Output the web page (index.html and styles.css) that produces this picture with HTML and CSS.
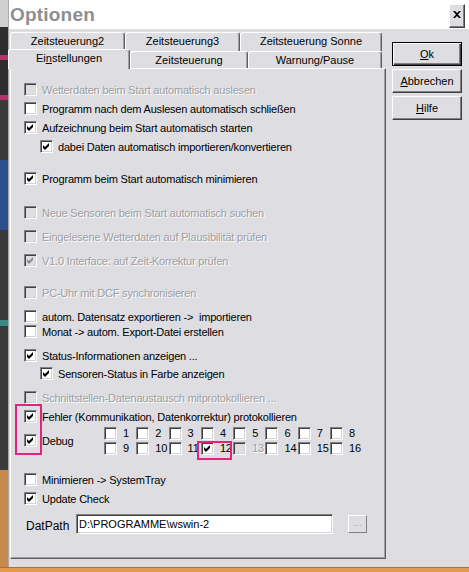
FILE: index.html
```html
<!DOCTYPE html>
<html lang="de">
<head>
    <meta charset="UTF-8">
    <title>Optionen</title>
    <link rel="stylesheet" href="styles.css">
</head>
<body>
<div class="screen">
    <div class="top">
        <div class="backdrop"></div>
        <div class="window">
            <div class="titlebar">
                <span class="title">Optionen</span>
                <span class="close">
                    <svg width="8" height="7" viewBox="0 0 8 7"><path d="M0 0h2l2 2 2-2h2L5 3.5 8 7H6L4 5 2 7H0l3-3.5z"/></svg>
                </span>
            </div>

            <div class="dialog">
                <div class="tabctl">
                    <div class="tabrow back">
                        <div class="tab w115">Zeitsteuerung2</div>
                        <div class="tab w115">Zeitsteuerung3</div>
                        <div class="tab w142">Zeitsteuerung Sonne</div>
                    </div>
                    <div class="tabrow front">
                        <div class="tab active">Ei<u>n</u>stellungen</div>
                        <div class="tab w118">Zeitsteuerung</div>
                        <div class="tab w134">Warnung/Pause</div>
                    </div>

                    <div class="panel">
                        <div class="row first disabled"><span class="cb"></span><span class="lbl">Wetterdaten beim Start automatisch auslesen</span></div>
                        <div class="row"><span class="cb"></span><span class="lbl">Programm nach dem Auslesen automatisch schließen</span></div>
                        <div class="row"><span class="cb on"><svg viewBox="0 0 9 9"><path d="M1 3l2 2 4-4v3L3 8 1 6z"/></svg></span><span class="lbl">Aufzeichnung beim Start automatisch starten</span></div>
                        <div class="row indent"><span class="cb on"><svg viewBox="0 0 9 9"><path d="M1 3l2 2 4-4v3L3 8 1 6z"/></svg></span><span class="lbl">dabei Daten automatisch importieren/konvertieren</span></div>

                        <div class="row sep"><span class="cb on"><svg viewBox="0 0 9 9"><path d="M1 3l2 2 4-4v3L3 8 1 6z"/></svg></span><span class="lbl">Programm beim Start automatisch minimieren</span></div>

                        <div class="row sep-l disabled"><span class="cb"></span><span class="lbl">Neue Sensoren beim Start automatisch suchen</span></div>
                        <div class="row mid disabled"><span class="cb"></span><span class="lbl">Eingelesene Wetterdaten auf Plausibilität prüfen</span></div>
                        <div class="row mid disabled"><span class="cb on"><svg viewBox="0 0 9 9"><path d="M1 3l2 2 4-4v3L3 8 1 6z"/></svg></span><span class="lbl">V1.0 Interface: auf Zeit-Korrektur prüfen</span></div>

                        <div class="row sep disabled"><span class="cb"></span><span class="lbl">PC-Uhr mit DCF synchronisieren</span></div>
                        <div class="row mid"><span class="cb"></span><span class="lbl">autom. Datensatz exportieren -&gt;&nbsp; importieren</span></div>
                        <div class="row tight"><span class="cb"></span><span class="lbl">Monat -&gt; autom. Export-Datei erstellen</span></div>
                        <div class="row mid"><span class="cb on"><svg viewBox="0 0 9 9"><path d="M1 3l2 2 4-4v3L3 8 1 6z"/></svg></span><span class="lbl">Status-Informationen anzeigen ...</span></div>
                        <div class="row near indent"><span class="cb on"><svg viewBox="0 0 9 9"><path d="M1 3l2 2 4-4v3L3 8 1 6z"/></svg></span><span class="lbl">Sensoren-Status in Farbe anzeigen</span></div>

                        <div class="row mid disabled"><span class="cb"></span><span class="lbl">Schnittstellen-Datenaustausch mitprotokollieren ...</span></div>
                        <div class="row"><span class="cb on"><svg viewBox="0 0 9 9"><path d="M1 3l2 2 4-4v3L3 8 1 6z"/></svg></span><span class="lbl">Fehler (Kommunikation, Datenkorrektur) protokollieren</span></div>

                        <div class="row debug">
                            <span class="cb on"><svg viewBox="0 0 9 9"><path d="M1 3l2 2 4-4v3L3 8 1 6z"/></svg></span>
                            <span class="lbl debug-lbl">Debug</span>
                            <div class="levels">
                                <div class="lvl"><span class="cb"></span>1</div>
                                <div class="lvl"><span class="cb"></span>2</div>
                                <div class="lvl"><span class="cb"></span>3</div>
                                <div class="lvl"><span class="cb"></span>4</div>
                                <div class="lvl"><span class="cb"></span>5</div>
                                <div class="lvl"><span class="cb"></span>6</div>
                                <div class="lvl"><span class="cb"></span>7</div>
                                <div class="lvl"><span class="cb"></span>8</div>
                                <div class="lvl"><span class="cb"></span>9</div>
                                <div class="lvl"><span class="cb"></span>10</div>
                                <div class="lvl"><span class="cb"></span>11</div>
                                <div class="lvl"><span class="cb on"><svg viewBox="0 0 9 9"><path d="M1 3l2 2 4-4v3L3 8 1 6z"/></svg></span>12</div>
                                <div class="lvl disabled"><span class="cb"></span>13</div>
                                <div class="lvl"><span class="cb"></span>14</div>
                                <div class="lvl"><span class="cb"></span>15</div>
                                <div class="lvl"><span class="cb"></span>16</div>
                            </div>
                        </div>

                        <div class="row sep"><span class="cb"></span><span class="lbl">Minimieren -&gt; SystemTray</span></div>
                        <div class="row"><span class="cb on"><svg viewBox="0 0 9 9"><path d="M1 3l2 2 4-4v3L3 8 1 6z"/></svg></span><span class="lbl">Update Check</span></div>

                        <div class="path-row">
                            <span class="path-lbl">DatPath</span>
                            <span class="path-input">D:\PROGRAMME\wswin-2</span>
                            <span class="browse">...</span>
                        </div>
                    </div>
                </div>

                <div class="buttons">
                    <button class="btn default"><u>O</u>k</button>
                    <button class="btn"><u>A</u>bbrechen</button>
                    <button class="btn"><u>H</u>ilfe</button>
                </div>
            </div>
        </div>
    </div>
    <div class="taskbar"></div>

    <div class="mark mark-debug"></div>
    <div class="mark mark-twelve"></div>
</div>
</body>
</html>
```

FILE: styles.css
```css
* {
    margin: 0;
    padding: 0;
    box-sizing: border-box;
}

body {
    font-family: "Liberation Sans", Arial, sans-serif;
    font-size: 11px;
    color: #000;
    background: #dedee2;
}

.screen {
    position: relative;
    display: flex;
    flex-direction: column;
    width: 469px;
    height: 572px;
    overflow: hidden;
    background: #dedee2;
}

.top {
    display: flex;
    height: 567px;
}

.backdrop {
    width: 8px;
    background: linear-gradient(to bottom,
        #d0d0d0 0 27px, #2e2e2e 27px 55px, #b8306a 55px 60px, #2e2e2e 60px 95px,
        #b8306a 95px 100px, #3a3a3a 100px 160px, #2b4f8a 160px 230px, #3a3a3a 230px 320px,
        #3b8a8a 320px 326px, #3a3a3a 326px 470px, #c78a4a 470px 567px);
}

.window {
    flex: 1;
    display: flex;
    flex-direction: column;
    border-left: 1px solid #a9a9ad;
    background: #dedee2;
}

/* title bar */
.titlebar {
    height: 29px;
    background: #fff;
    display: flex;
    align-items: flex-start;
    justify-content: space-between;
    padding-left: 1px;
}

.title {
    font-size: 19px;
    font-weight: bold;
    color: #8e8e92;
    line-height: 29px;
    letter-spacing: 0.2px;
}

.close {
    width: 16px;
    height: 24px;
    margin: 4px 4px 0 0;
    background: #dedee2;
    border: 1px solid;
    border-color: #fff #404040 #404040 #fff;
    box-shadow: inset -1px -1px #808080;
    display: flex;
    align-items: center;
    justify-content: center;
    padding-bottom: 4px;
}

.close svg {
    fill: #000;
}

/* dialog */
.dialog {
    flex: 1;
    display: flex;
    align-items: flex-start;
}

.tabctl {
    width: 376px;
    margin: 3px 0 0 1px;
}

.tabrow {
    display: flex;
    align-items: flex-start;
}

.tabrow.back {
    height: 19px;
}

.tabrow.front {
    height: 17px;
}

.tab {
    height: 100%;
    background: #dedee2;
    border-top: 1px solid #fff;
    border-left: 1px solid #fff;
    border-right: 1px solid #5e5e62;
    border-radius: 3px 3px 0 0;
    box-shadow: inset -1px 0 #a0a0a4;
    text-align: center;
    line-height: 17px;
    white-space: nowrap;
}

.w115 { width: 115px; }
.w142 { width: 142px; }
.w118 { width: 118px; }
.w134 { width: 134px; }

.tab.active {
    position: relative;
    z-index: 1;
    width: 122px;
    height: 20px;
    margin: -2px 0 0 -2px;
    line-height: 17px;
}

.panel {
    height: 491px;
    border: 1px solid;
    border-color: #fff #5e5e62 #5e5e62 #fff;
    box-shadow: inset -1px -1px #a0a0a4;
    padding: 14px 0 0 13px;
}

/* checkbox rows */
.row {
    display: flex;
    align-items: center;
    height: 13px;
    margin-top: 6px;
    letter-spacing: -0.2px;
    white-space: nowrap;
}

.row.first { margin-top: 0; }
.row.tight { margin-top: 2px; }
.row.near { margin-top: 5px; }
.row.mid { margin-top: 11px; }
.row.sep { margin-top: 19px; }
.row.sep-l { margin-top: 21px; }
.row.indent { padding-left: 16px; }

.lbl {
    margin-left: 5px;
}

.cb {
    flex: none;
    width: 13px;
    height: 13px;
    background: #fff;
    border: 1px solid;
    border-color: #808080 #fff #fff #808080;
    box-shadow: inset 1px 1px #404040, inset -1px -1px #d4d4d8;
    display: flex;
    align-items: center;
    justify-content: center;
}

.cb svg {
    width: 9px;
    height: 9px;
    fill: #000;
}

.disabled {
    color: #9d9da1;
    text-shadow: 1px 1px 0 #fff;
}

.disabled .cb {
    background: #dedee2;
}

.disabled .cb svg {
    fill: #8a8a8e;
}

/* debug levels */
.row.debug {
    height: 27px;
    margin-top: 4px;
}

.debug-lbl {
    width: 62px;
}

.levels {
    display: grid;
    grid-template-columns: repeat(8, 32.3px);
    row-gap: 3px;
}

.lvl {
    display: flex;
    align-items: center;
    gap: 6px;
    height: 12px;
}

/* path */
.path-row {
    display: flex;
    align-items: center;
    margin-top: 9px;
    padding-left: 2px;
}

.path-lbl {
    width: 50px;
    font-size: 12px;
    padding-top: 3px;
}

.path-input {
    width: 257px;
    height: 20px;
    background: #fff;
    border: 1px solid;
    border-color: #808080 #fff #fff #808080;
    box-shadow: inset 1px 1px #404040, inset -1px -1px #d4d4d8;
    padding: 0 0 0 2px;
    line-height: 18px;
    font-size: 11px;
}

.browse {
    width: 19px;
    height: 18px;
    margin-left: 15px;
    border: 1px solid;
    border-color: #fff #808080 #808080 #fff;
    color: #a8a8ac;
    text-align: center;
    line-height: 14px;
    font-size: 10px;
}

/* buttons */
.buttons {
    width: 70px;
    margin: 13px 0 0 6px;
    display: flex;
    flex-direction: column;
    gap: 3px;
}

.btn {
    height: 24px;
    font-family: "Liberation Sans", Arial, sans-serif;
    font-size: 11px;
    background: #dedee2;
    border: 1px solid;
    border-color: #fff #404040 #404040 #fff;
    box-shadow: inset -1px -1px #808080;
    color: #000;
}

.btn.default {
    border: 1px solid #000;
    box-shadow: inset 1px 1px #fff, inset -1px -1px #404040, inset -2px -2px #808080;
}

.taskbar {
    height: 5px;
    background: #e29a4c;
    border-top: 1px solid #b07030;
}

/* pink annotation frames */
.mark {
    position: absolute;
    border: 2px solid #e2237f;
}

.mark-debug {
    left: 15px;
    top: 404px;
    width: 27px;
    height: 51px;
}

.mark-twelve {
    left: 197px;
    top: 441px;
    width: 35px;
    height: 19px;
}
```
